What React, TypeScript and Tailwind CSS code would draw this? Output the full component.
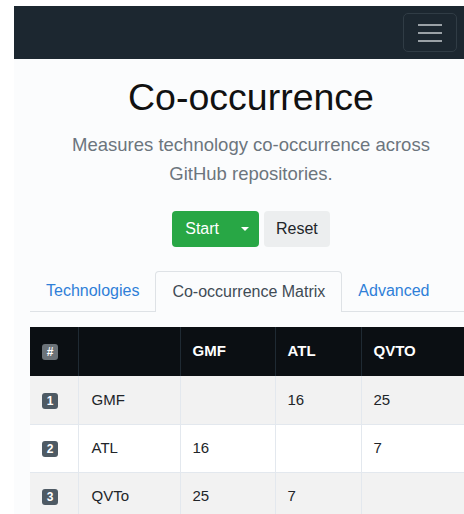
import React from "react";

type Row = { id: number; name: string; values: (number | null)[] };

const columns = ["GMF", "ATL", "QVTO"];

const rows: Row[] = [
  { id: 1, name: "GMF", values: [null, 16, 25] },
  { id: 2, name: "ATL", values: [16, null, 7] },
  { id: 3, name: "QVTo", values: [25, 7, null] },
];

function Badge({ children, dark }: { children: React.ReactNode; dark?: boolean }) {
  return (
    <span
      className={`inline-flex h-[16px] w-[16px] shrink-0 items-center justify-center rounded-[3px] align-middle text-[12px] font-bold leading-none text-white ${
        dark ? "bg-[#6b7278]" : "bg-[#4e5a64]"
      }`}
    >
      {children}
    </span>
  );
}

function Navbar() {
  return (
    <nav className="flex h-[53px] items-center justify-end bg-[#1c2730] pr-[31px]">
      <button className="flex h-[39px] w-[54px] flex-col items-center justify-center gap-[6px] rounded-[5px] border border-[#303c45]">
        <span className="h-[2px] w-[24px] bg-[#9aa1a6]" />
        <span className="h-[2px] w-[24px] bg-[#9aa1a6]" />
        <span className="h-[2px] w-[24px] bg-[#9aa1a6]" />
      </button>
    </nav>
  );
}

function Tabs() {
  return (
    <div className="flex h-[41px] border-b border-[#dee2e6] text-[16px]">
      <a className="flex items-center px-[16px] text-[#2f7fd8]">Technologies</a>
      <a className="-mb-px flex items-center rounded-t-[4px] border border-b-0 border-[#dee2e6] bg-[#fbfcfd] px-[16px] text-[#3f4b55]">
        Co-occurrence Matrix
      </a>
      <a className="flex items-center px-[16px] text-[#2f7fd8]">Advanced</a>
    </div>
  );
}

function Matrix() {
  return (
    <table className="mt-[15px] w-[560px] table-fixed border-collapse text-[15px] text-[#212529]">
      <colgroup>
        <col className="w-[48px]" />
        <col className="w-[102px]" />
        <col className="w-[95px]" />
        <col className="w-[86px]" />
        <col className="w-[229px]" />
      </colgroup>
      <thead>
        <tr className="h-[49px] bg-[#0b0f13] text-left text-white">
          <th className="border-r border-[#1f2a33] pl-[12px] font-normal">
            <Badge dark>#</Badge>
          </th>
          <th className="border-r border-[#1f2a33]" />
          {columns.map((c) => (
            <th key={c} className="border-r border-[#1f2a33] pl-[12px] font-bold">
              {c}
            </th>
          ))}
        </tr>
      </thead>
      <tbody>
        {rows.map((r) => (
          <tr
            key={r.id}
            className={`h-[48px] border-b border-[#e3e8ee] ${r.id % 2 ? "bg-[#f2f2f2]" : "bg-white"}`}
          >
            <td className="border-r border-[#e3e8ee] pl-[12px]">
              <Badge>{r.id}</Badge>
            </td>
            <td className="border-r border-[#e3e8ee] pl-[13px]">{r.name}</td>
            {r.values.map((v, i) => (
              <td key={i} className="border-r border-[#e3e8ee] pl-[12px]">
                {v ?? ""}
              </td>
            ))}
          </tr>
        ))}
      </tbody>
    </table>
  );
}

export default function App() {
  return (
    <div className="h-[514px] w-[464px] overflow-hidden bg-white pl-[14px] pt-[6px] font-['Liberation_Sans',Arial,sans-serif]">
      <div className="h-[520px] w-[474px] bg-[#fbfcfd]">
        <Navbar />
        <div className="px-[16px]">
          <div className="text-center">
            <h1 className="mt-[16px] text-[37.5px] font-light leading-[44px] text-[#111]">
              Co-occurrence
            </h1>
            <p className="mx-auto mt-[11px] max-w-[390px] text-[18.5px] font-light leading-[29px] text-[#6c757d]">
              Measures technology co-occurrence across GitHub repositories.
            </p>
            <div className="mt-[23px] flex justify-center gap-[5px]">
              <div className="flex h-[36px] items-center rounded-[4px] bg-[#28a745] text-[16px] text-white">
                <span className="pl-[13px] pr-[12px]">Start</span>
                <span className="flex h-full items-center pl-[10px] pr-[10px]">
                  <span className="h-0 w-0 border-x-[4px] border-t-[4px] border-x-transparent border-t-white" />
                </span>
              </div>
              <button className="h-[36px] rounded-[4px] bg-[#eceeef] px-[12px] text-[16px] text-[#212529]">
                Reset
              </button>
            </div>
          </div>
          <div className="mt-[24px]">
            <Tabs />
          </div>
          <Matrix />
        </div>
      </div>
    </div>
  );
}
